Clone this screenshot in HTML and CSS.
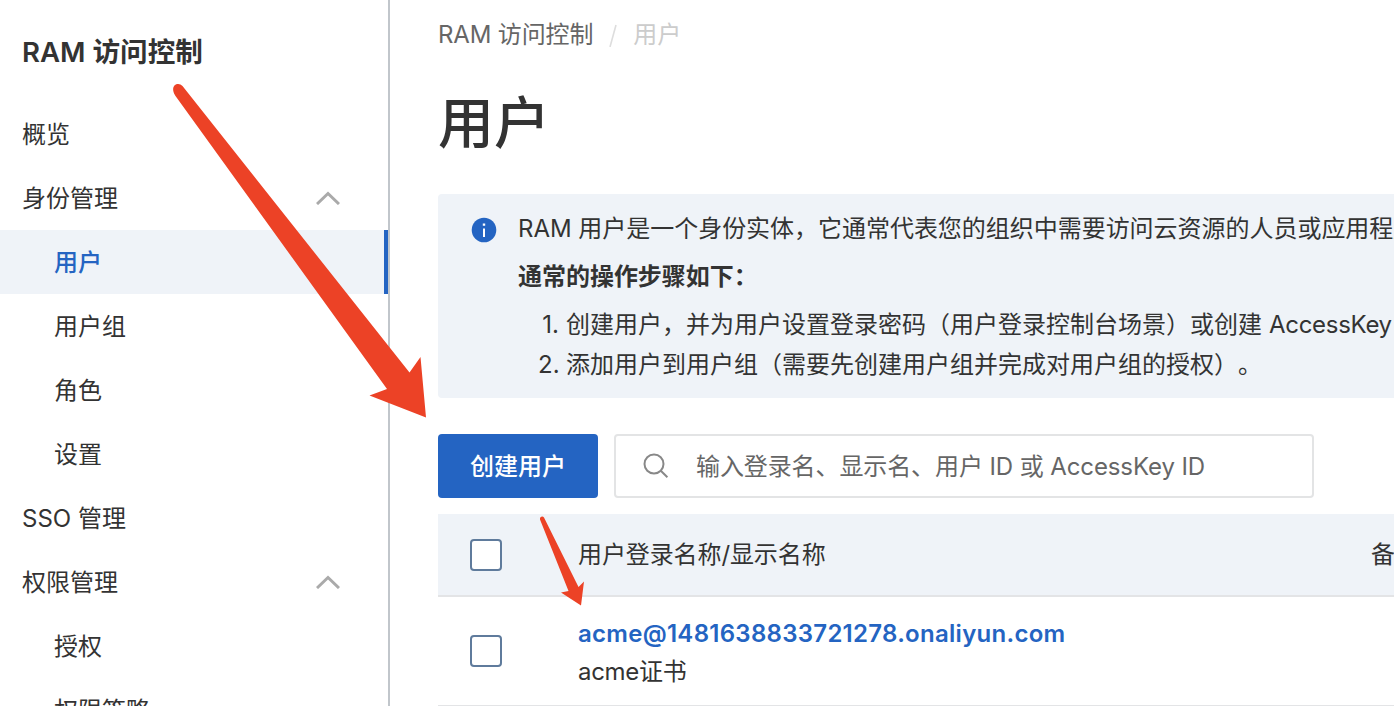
FILE: index.html
```
<!DOCTYPE html>
<html lang="zh-CN">
<head>
  <meta charset="UTF-8">
  <meta name="viewport" content="width=device-width, initial-scale=1.0">
  <title>RAM 访问控制</title>
  <link rel="stylesheet" href="styles.css">
</head>
<body>

  <div class="layout">
    <!-- Sidebar -->
    <aside class="sidebar">
      <h2 class="sidebar-title">RAM 访问控制</h2>
      <nav class="menu">
        <a class="menu-item">概览</a>
        <a class="menu-item">身份管理
          <svg class="chevron" viewBox="0 0 24 14"><path d="M1 13 12 2.500l11 10.500"/></svg>
        </a>
        <a class="menu-item sub active">用户</a>
        <a class="menu-item sub">用户组</a>
        <a class="menu-item sub">角色</a>
        <a class="menu-item sub">设置</a>
        <a class="menu-item">SSO 管理</a>
        <a class="menu-item">权限管理
          <svg class="chevron" viewBox="0 0 24 14"><path d="M1 13 12 2.500l11 10.500"/></svg>
        </a>
        <a class="menu-item sub">授权</a>
        <a class="menu-item sub">权限策略</a>
      </nav>
    </aside>

    <!-- Main content -->
    <main class="content">
      <div class="breadcrumb">
        <span class="crumb">RAM 访问控制</span>
        <svg class="slash" viewBox="0 0 8 24"><path d="M7 2 1 24"/></svg>
        <span class="crumb-current">用户</span>
      </div>

      <h1>用户</h1>

      <div class="notice">
        <svg class="info-icon" viewBox="0 0 26 26">
          <circle cx="13" cy="13" r="12.3"/>
          <path d="M12 11.500h2v8.500h-2zM11.800 6.600h2.400v2.200h-2.400z"/>
        </svg>
        <div class="notice-body">
          <p>RAM 用户是一个身份实体，它通常代表您的组织中需要访问云资源的人员或应用程序</p>
          <p class="notice-strong">通常的操作步骤如下：</p>
          <ol>
            <li><span class="num">1.</span>创建用户，并为用户设置登录密码（用户登录控制台场景）或创建 <span class="key">AccessKey</span></li>
            <li><span class="num">2.</span>添加用户到用户组（需要先创建用户组并完成对用户组的授权）。</li>
          </ol>
        </div>
      </div>

      <div class="toolbar">
        <button class="button">创建用户</button>
        <div class="search">
          <svg class="search-icon" viewBox="0 0 26 26"><circle cx="11" cy="11" r="9.5"/><path d="m17.800 17.800 6.600 6.400"/></svg>
          <span class="search-text">输入登录名、显示名、用户 ID 或 AccessKey ID</span>
        </div>
      </div>

      <div class="table">
        <div class="row head">
          <span class="checkbox"></span>
          <div class="name">用户登录名称/显示名称</div>
          <div class="remark">备注</div>
        </div>
        <div class="row">
          <span class="checkbox"></span>
          <div class="name">
            <a class="link">acme@1481638833721278.onaliyun.com</a>
            <div class="display-name">acme证书</div>
          </div>
        </div>
      </div>
    </main>
  </div>

  <!-- Arrows -->
  <svg class="arrows" viewBox="0 0 1394 706">
    <path d="M182.500 86 C179 82 172 84 173.300 91 C173.800 93 174.500 94.500 175.500 96 L387 389 L369.500 395.500 L426 417.500 L420.500 357 L409.500 372.500 Z"/>
    <path d="M544 517.500 C542.500 515.500 539.500 517 540 519.500 L568.500 591 L561 592.500 L581 605.500 L584 581.500 L578.500 587 Z"/>
  </svg>

</body>
</html>
```
FILE: styles.css
```
* {
  margin: 0;
  padding: 0;
  box-sizing: border-box;
}

body {
  height: 100vh;
  overflow: hidden;
  position: relative;
  background: #fff;
  color: #333;
  font-family: Inter, "Noto Sans CJK SC", sans-serif;
  font-size: 24px;
  text-spacing-trim: space-all;
}

.layout {
  display: flex;
  height: 706px;
  overflow: hidden;
}

/* Sidebar */
.sidebar {
  width: 390px;
  flex-shrink: 0;
  border-right: 2px solid #c1c6cb;
}

.sidebar-title {
  height: 102px;
  padding-left: 22px;
  line-height: 104px;
  font-size: 27.6px;
  font-weight: 600;
}

.menu-item {
  display: flex;
  align-items: center;
  justify-content: space-between;
  height: 64px;
  padding: 0 48px 3px 22px;
}

.menu-item.sub {
  padding-left: 54px;
}

.menu-item.active {
  background: #eff3f8;
  border-right: 4px solid #2464c2;
  color: #2464c2;
  font-weight: 500;
}

.chevron {
  width: 24px;
  height: 14px;
  margin-top: 2px;
  fill: none;
  stroke: #aaa;
  stroke-width: 3;
}

/* Main content */
.content {
  flex: 1;
  min-width: 0;
  padding-left: 48px;
}

.breadcrumb {
  display: flex;
  align-items: center;
  height: 68px;
  padding-bottom: 3px;
  color: #666;
}

.crumb {
  letter-spacing: -0.15px;
}

.slash {
  width: 8px;
  height: 24px;
  margin: 4px 16px 0;
  fill: none;
  stroke: #ddd;
  stroke-width: 1.6;
}

.crumb-current {
  color: #ccc;
}

h1 {
  height: 126px;
  line-height: 111px;
  font-size: 56px;
  font-weight: 500;
}

.notice {
  display: flex;
  height: 204px;
  padding: 11px 0 0 33px;
  background: #eff3f8;
  border-radius: 4px 0 0 4px;
  white-space: nowrap;
}

.info-icon {
  width: 26px;
  height: 26px;
  margin: 12px 21px 0 0;
  flex-shrink: 0;
  fill: #fff;
}

.info-icon circle {
  fill: #2464c2;
}

.notice-body p {
  height: 48px;
  line-height: 48px;
  letter-spacing: -0.03px;
}

.notice-body .notice-strong {
  font-weight: 600;
}

.notice-body ol {
  padding: 4px 0 0 20px;
  list-style: none;
}

.notice-body li {
  display: flex;
  height: 40px;
  line-height: 40px;
}

.num {
  width: 28px;
  padding-right: 7px;
  text-align: right;
}

.key {
  margin-left: 7px;
  letter-spacing: -0.3px;
}

.toolbar {
  display: flex;
  gap: 16px;
  margin: 36px 0 16px;
}

.button {
  width: 160px;
  height: 64px;
  padding-bottom: 3px;
  border: none;
  border-radius: 4px;
  background: #2464c2;
  color: #fff;
  font-family: inherit;
  font-size: 24px;
  font-weight: 500;
}

.search {
  display: flex;
  align-items: center;
  width: 700px;
  height: 64px;
  padding-left: 27px;
  border: 2px solid #e3e4e5;
  border-radius: 4px;
  color: #666;
}

.search-icon {
  width: 26px;
  height: 26px;
  margin-right: 27px;
  fill: none;
  stroke: #888;
  stroke-width: 2;
}

.search-text {
  padding-bottom: 3px;
  letter-spacing: -0.1px;
}

/* Table */
.row {
  display: flex;
  align-items: center;
  height: 110px;
  padding-left: 32px;
  border-bottom: 2px solid #e3e4e6;
}

.row.head {
  height: 83px;
  background: #eff3f8;
}

.checkbox {
  width: 32px;
  height: 32px;
  margin-right: 76px;
  flex-shrink: 0;
  border: 2px solid #5f7b9c;
  border-radius: 4px;
  background: #fff;
}

.name {
  width: 793px;
  flex-shrink: 0;
  padding-top: 4px;
  line-height: 38px;
}

.head .name {
  padding-top: 0;
  letter-spacing: -0.1px;
}

.link {
  display: block;
  color: #2464c2;
  font-weight: 600;
  letter-spacing: 0.28px;
}

.display-name {
  letter-spacing: -0.3px;
}

.remark {
  line-height: 38px;
  white-space: nowrap;
}

/* Arrows drawn over the page */
.arrows {
  position: absolute;
  top: 0;
  left: 0;
  width: 1394px;
  height: 706px;
  fill: #ec4226;
  pointer-events: none;
}
```
